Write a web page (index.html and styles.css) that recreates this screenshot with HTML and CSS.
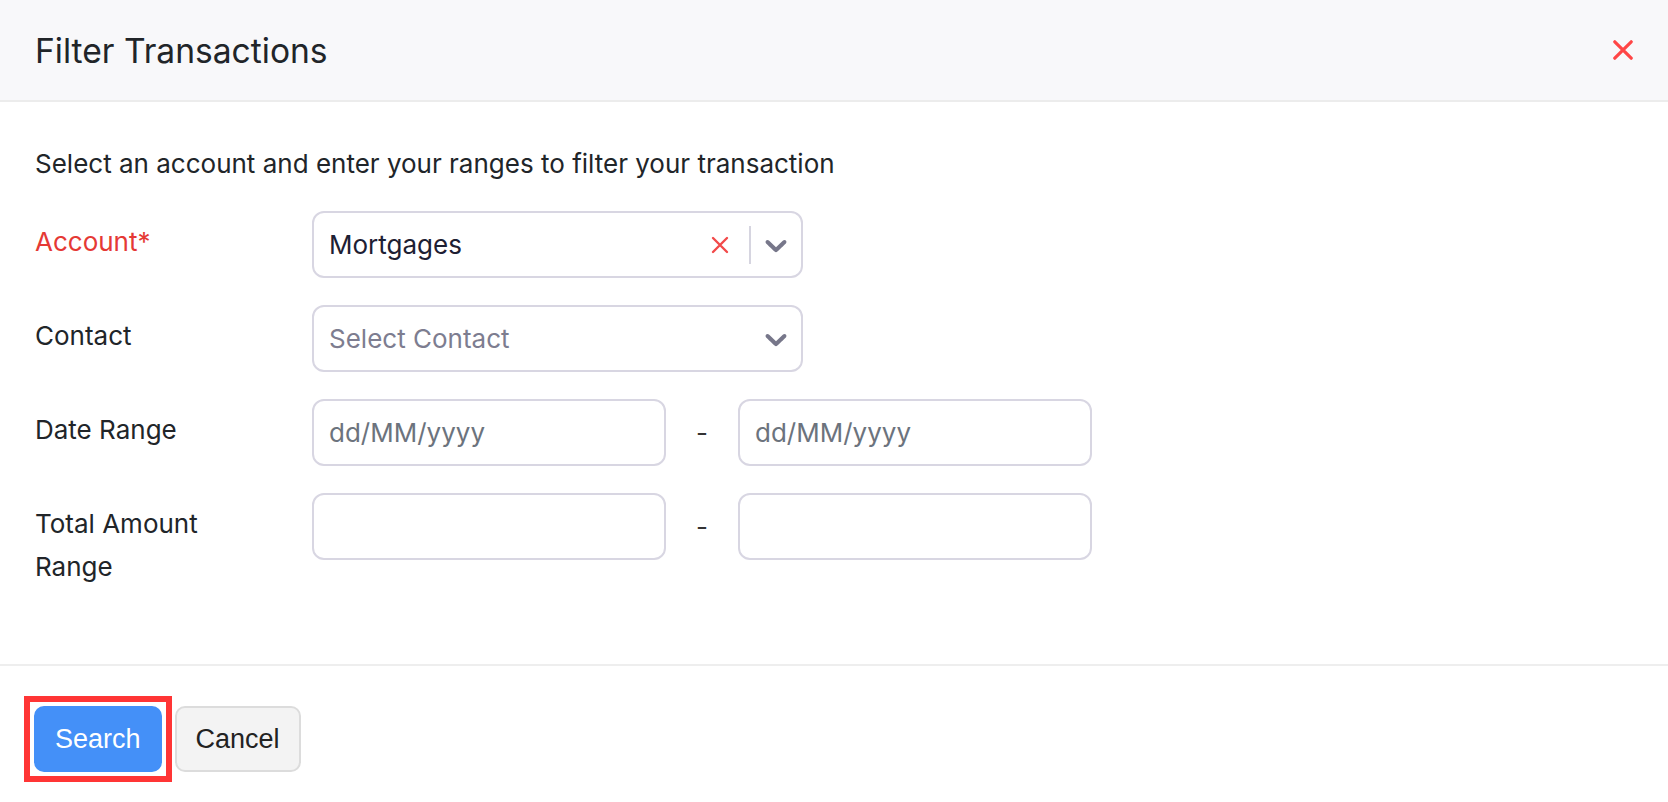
FILE: index.html
```html
<!DOCTYPE html>
<html lang="en">
<head>
    <meta charset="UTF-8">
    <meta name="viewport" content="width=device-width, initial-scale=1.0">
    <title>Filter Transactions</title>
    <link rel="stylesheet" href="styles.css">
</head>
<body>
    <div class="modal">
        <div class="modal-header">
            <h1 class="modal-title">Filter Transactions</h1>
            <button class="close-btn" aria-label="Close">
                <svg width="20" height="20" viewBox="0 0 20 20">
                    <path d="M1.8 1.8L18.2 18.2M18.2 1.8L1.8 18.2" stroke="#ff4646" stroke-width="3.2" stroke-linecap="round"/>
                </svg>
            </button>
        </div>

        <div class="modal-body">
            <p class="intro">Select an account and enter your ranges to filter your transaction</p>

            <div class="form-row">
                <label class="form-label required">Account*</label>
                <div class="select">
                    <span class="select-value">Mortgages</span>
                    <span class="select-clear">
                        <svg width="18" height="18" viewBox="0 0 18 18">
                            <path d="M2 2L16 16M16 2L2 16" stroke="#f24a4a" stroke-width="2.4" stroke-linecap="round"/>
                        </svg>
                    </span>
                    <span class="select-sep"></span>
                    <span class="select-arrow">
                        <svg width="36" height="36" viewBox="0 0 20 20"><path fill="#77778a" d="M4.516 7.548c0.436-0.446 1.043-0.481 1.576 0l3.908 3.747 3.908-3.747c0.533-0.481 1.141-0.446 1.574 0 0.436 0.445 0.408 1.197 0 1.615-0.406 0.418-4.695 4.502-4.695 4.502-0.217 0.223-0.502 0.335-0.787 0.335s-0.57-0.112-0.789-0.335c0 0-4.287-4.084-4.695-4.502s-0.436-1.17 0-1.615z"/></svg>
                    </span>
                </div>
            </div>

            <div class="form-row">
                <label class="form-label">Contact</label>
                <div class="select">
                    <span class="select-value placeholder">Select Contact</span>
                    <span class="select-arrow">
                        <svg width="36" height="36" viewBox="0 0 20 20"><path fill="#77778a" d="M4.516 7.548c0.436-0.446 1.043-0.481 1.576 0l3.908 3.747 3.908-3.747c0.533-0.481 1.141-0.446 1.574 0 0.436 0.445 0.408 1.197 0 1.615-0.406 0.418-4.695 4.502-4.695 4.502-0.217 0.223-0.502 0.335-0.787 0.335s-0.57-0.112-0.789-0.335c0 0-4.287-4.084-4.695-4.502s-0.436-1.17 0-1.615z"/></svg>
                    </span>
                </div>
            </div>

            <div class="form-row">
                <label class="form-label">Date Range</label>
                <div class="range">
                    <input type="text" class="input" placeholder="dd/MM/yyyy">
                    <span class="range-sep">-</span>
                    <input type="text" class="input" placeholder="dd/MM/yyyy">
                </div>
            </div>

            <div class="form-row">
                <label class="form-label">Total Amount Range</label>
                <div class="range">
                    <input type="text" class="input">
                    <span class="range-sep">-</span>
                    <input type="text" class="input">
                </div>
            </div>
        </div>

        <div class="modal-footer">
            <button class="btn btn-primary">Search</button>
            <button class="btn btn-secondary">Cancel</button>
        </div>
    </div>
</body>
</html>
```

FILE: styles.css
```css
* {
    box-sizing: border-box;
}
body {
    margin: 0;
    font-family: Inter, "Noto Sans", sans-serif;
    color: #212529;
    background: white;
}
.modal-header {
    height: 102px;
    display: flex;
    align-items: center;
    justify-content: space-between;
    padding: 0 35px;
    background-color: #f8f8fa;
    border-bottom: 2px solid #ececec;
}
.modal-title {
    margin: 0;
    font-size: 33.6px;
    font-weight: 400;
    color: #212529;
}
.close-btn {
    display: flex;
    padding: 0;
    border: none;
    background: none;
    cursor: pointer;
}
.modal-body {
    padding: 40px 35px 76px;
}
.intro {
    margin: 0 0 26px;
    font-size: 26px;
    line-height: 43px;
}
.form-row {
    display: flex;
    align-items: flex-start;
    margin-bottom: 27px;
}
.form-row:last-child {
    margin-bottom: 0;
}
.form-label {
    width: 240px;
    flex: none;
    margin-right: 37px;
    padding-top: 9px;
    font-size: 26px;
    line-height: 43px;
}
.required {
    color: #e53935;
}
.select {
    width: 491px;
    height: 67px;
    display: flex;
    align-items: center;
    padding: 0 7px 0 15px;
    border: 2px solid #d8d6e2;
    border-radius: 12px;
    font-size: 26px;
}
.select-value {
    flex: 1;
    color: #1d2033;
}
.select-value.placeholder {
    color: #7d7d90;
}
.select-clear {
    display: flex;
    margin-right: 20px;
}
.select-sep {
    width: 2px;
    height: 38px;
    margin-right: 7px;
    background-color: #d6d5e0;
}
.select-arrow {
    display: flex;
}
.range {
    display: flex;
    align-items: center;
}
.input {
    width: 354px;
    height: 67px;
    padding: 0 15px;
    border: 2px solid #d8d6e2;
    border-radius: 12px;
    font-family: Inter, "Noto Sans", sans-serif;
    font-size: 26px;
    color: #1d2033;
    outline: none;
}
.input::placeholder {
    color: #6c737d;
}
.range-sep {
    width: 72px;
    text-align: center;
    font-size: 26px;
    color: #333;
}
.modal-footer {
    display: flex;
    padding: 40px 34px;
    border-top: 2px solid #eeeeee;
}
.btn {
    height: 66px;
    padding: 0 19px;
    border: 2px solid transparent;
    border-radius: 10px;
    font-family: "Liberation Sans", Arial, sans-serif;
    font-size: 27px;
    cursor: pointer;
}
.btn-primary {
    position: relative;
    background-color: #4490f8;
    border-color: #4490f8;
    color: white;
}
/* highlight frame drawn over the search button */
.btn-primary::after {
    content: "";
    position: absolute;
    top: -12px;
    right: -12px;
    bottom: -12px;
    left: -12px;
    border: 6px solid #ff3535;
}
.btn-secondary {
    margin-left: 13px;
    background-color: #f3f3f3;
    border-color: #dcdcdc;
    color: #222;
}
```
